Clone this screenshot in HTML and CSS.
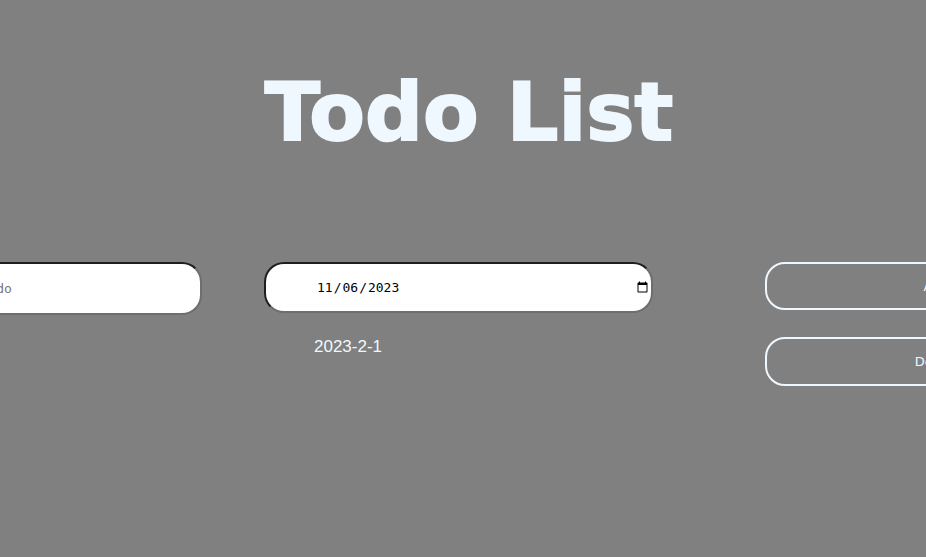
FILE: index.html
```html
<!DOCTYPE html>
<html lang="en">
<head>
<meta charset="utf-8">
<title>Todo List</title>
<link rel="stylesheet" href="styles.css">
</head>
<body>
<div class="page">
  <h1 class="title">Todo List</h1>
  <div class="row">
    <div class="col col-text">
      <input class="field field-text" type="text" placeholder="Type your new todo">
    </div>
    <div class="col col-date">
      <input class="field field-date" type="date" value="2023-11-06">
      <p class="date-note">2023-2-1</p>
    </div>
    <div class="col col-actions">
      <button class="btn">Add</button>
      <button class="btn">Delete</button>
    </div>
  </div>
</div>
</body>
</html>
```
FILE: styles.css
```css
html, body {
  margin: 0;
  padding: 0;
  background: #808080;
  height: 100%;
  overflow: hidden;
}
.page {
  width: 926px;
}
.title {
  margin: 65px 0 0 12px;
  font-family: "DejaVu Sans", sans-serif;
  font-weight: bold;
  font-size: 81px;
  line-height: normal;
  color: #f0f8ff;
  text-align: center;
  -webkit-text-stroke: 2px #f0f8ff;
}
.row {
  display: flex;
  align-items: flex-start;
  margin-top: 103px;
  margin-left: -181px;
}
.col {
  display: flex;
  flex-direction: column;
  flex: none;
}
.col-date {
  margin-left: 62px;
}
.col-actions {
  margin-left: 112px;
  gap: 27px;
}
.field {
  box-sizing: border-box;
  border: 2px solid;
  border-color: #1e1e1e #6e6e6e #6e6e6e #1e1e1e;
  border-radius: 20px;
  background: #fff;
  font-family: "DejaVu Sans Mono", monospace;
  font-size: 13px;
  color: #000;
  outline: none;
}
.field-text {
  width: 383px;
  height: 53px;
  padding: 0 0 0 50px;
}
.field-text::placeholder {
  color: #777;
}
.field-date {
  width: 389px;
  height: 51px;
  padding: 0 0 0 50px;
}
.date-note {
  margin: 24px 0 0 50px;
  font-family: "Liberation Sans", sans-serif;
  font-size: 17px;
  line-height: normal;
  color: #f0f8ff;
}
.btn {
  box-sizing: border-box;
  width: 342px;
  height: 48px;
  border: 2px solid #f0f8ff;
  border-radius: 20px;
  background: transparent;
  color: #f0f8ff;
  font-family: "DejaVu Sans", sans-serif;
  font-size: 13px;
}
.btn + .btn {
  height: 49px;
}
```
